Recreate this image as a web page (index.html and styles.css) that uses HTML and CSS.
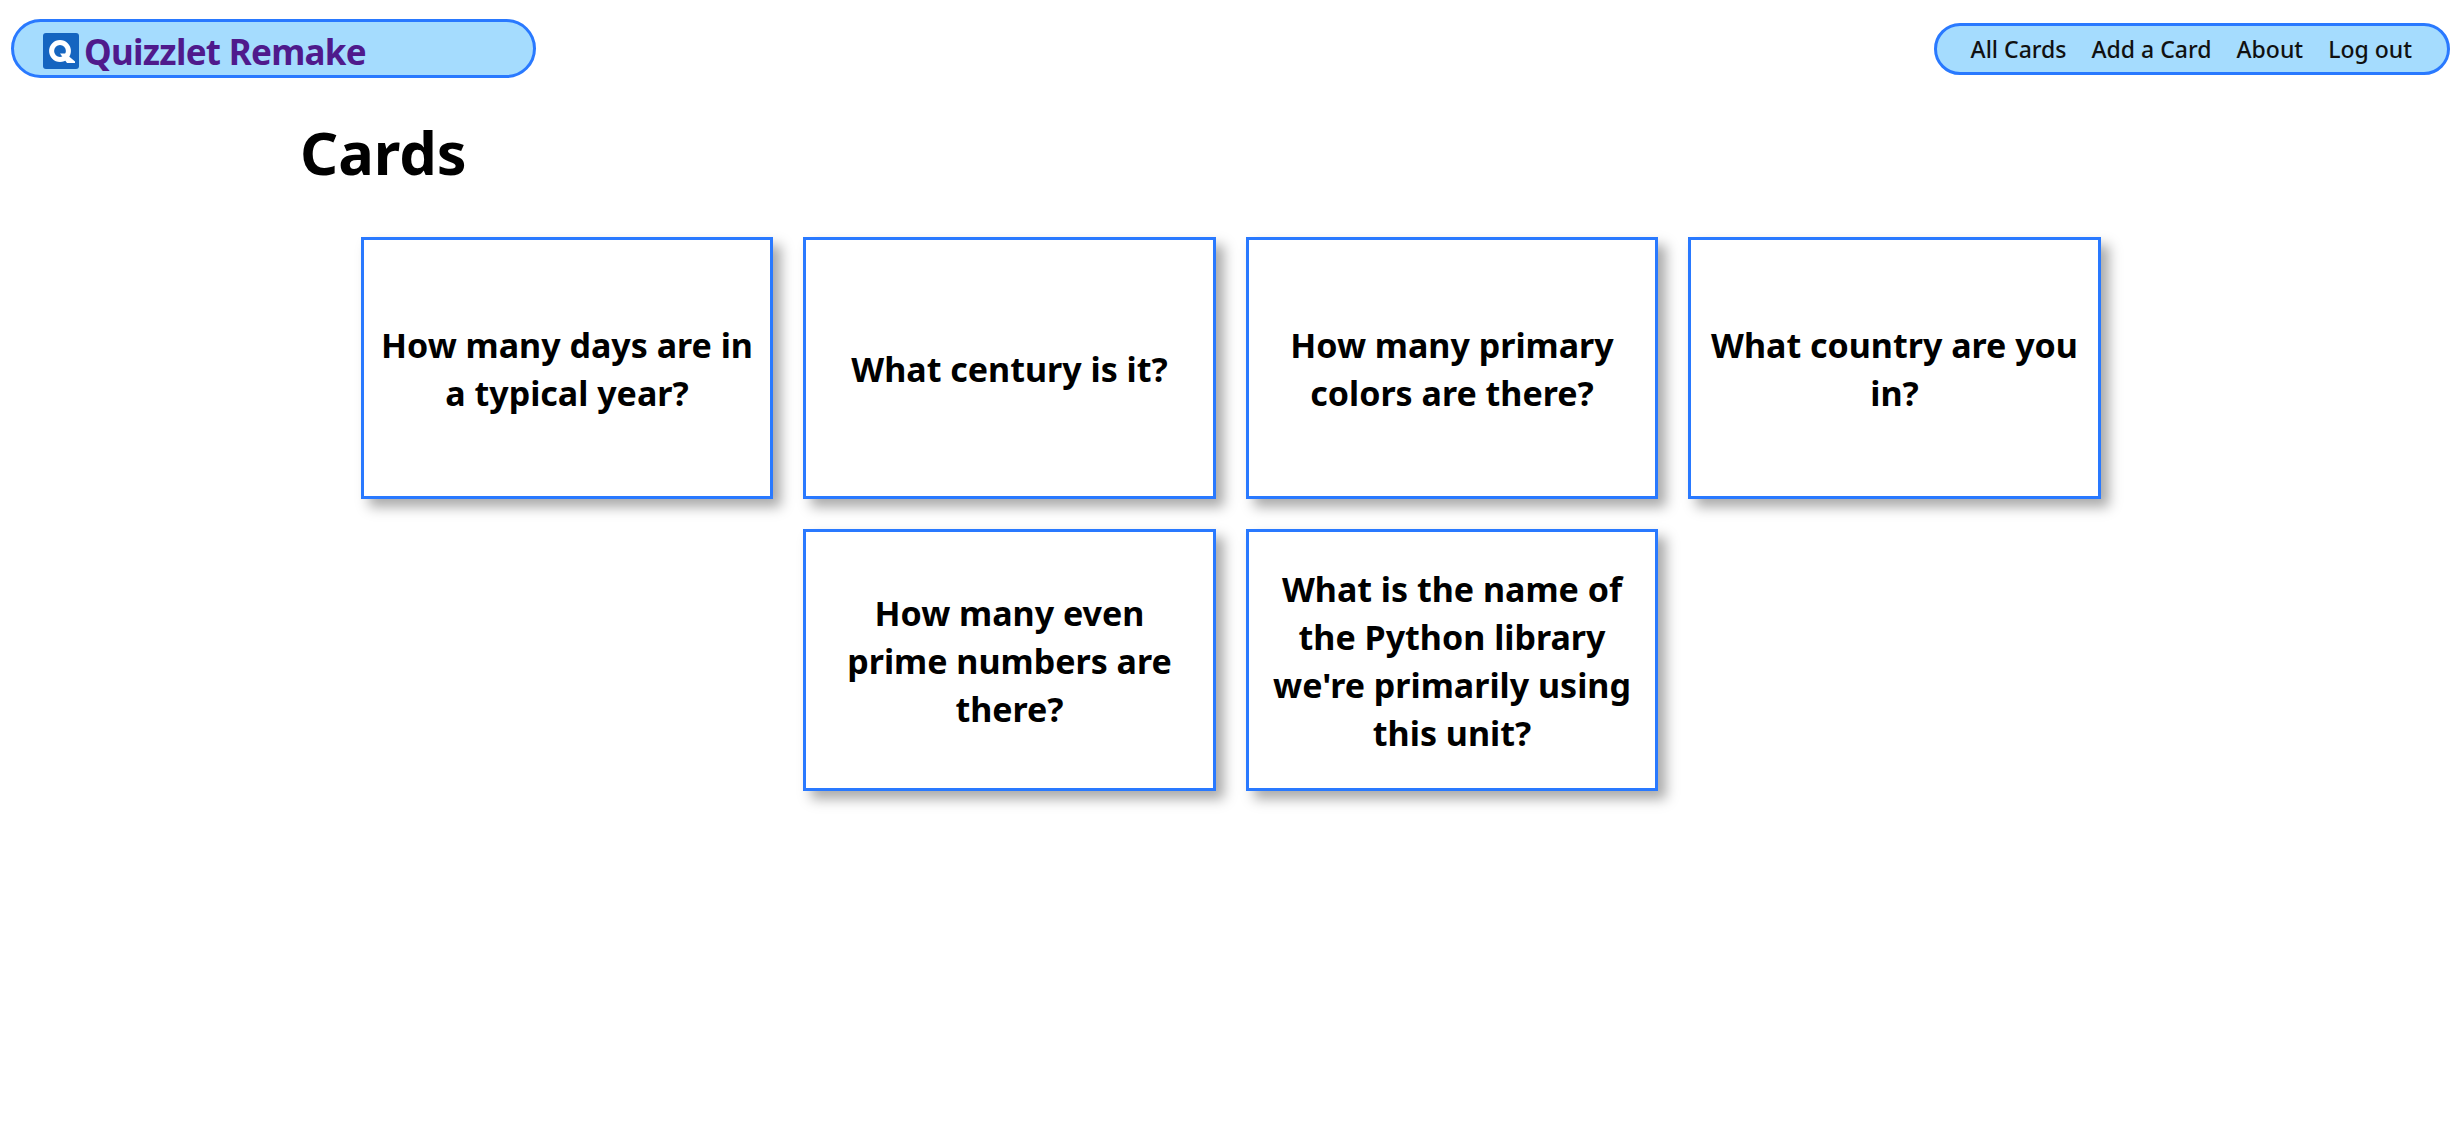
FILE: index.html
```html
<!DOCTYPE html>
<html lang="en">
<head>
<meta charset="utf-8">
<title>Quizzlet Remake</title>
<link rel="stylesheet" href="styles.css">
</head>
<body>
<header class="site-header">
  <a class="brand" href="#">
    <svg class="brand-icon" viewBox="0 0 36 36" aria-hidden="true">
      <rect width="36" height="36" rx="3" fill="#1565c0"/>
      <circle cx="17" cy="18" r="8.4" fill="none" stroke="#fff" stroke-width="5"/>
      <path d="M17 20.5h5.5l9.5 8v1.500h-8z" fill="#fff"/>
    </svg>
    <span>Quizzlet Remake</span>
  </a>
  <nav class="site-nav">
    <a href="#">All Cards</a>
    <a href="#">Add a Card</a>
    <a href="#">About</a>
    <a href="#">Log out</a>
  </nav>
</header>
<main class="content">
  <h1 class="page-title">Cards</h1>
  <section class="card-list">
    <article class="card">How many days are in a typical year?</article>
    <article class="card">What century is it?</article>
    <article class="card">How many primary colors are there?</article>
    <article class="card">What country are you in?</article>
    <article class="card">How many even prime numbers are there?</article>
    <article class="card">What is the name of the Python library we're primarily using this unit?</article>
  </section>
</main>
</body>
</html>
```
FILE: styles.css
```css
* { box-sizing: border-box; }
body {
  margin: 0;
  min-height: 100vh;
  background: #fff;
  color: #000;
  font-family: "Noto Sans", "Open Sans", sans-serif;
}
a { color: inherit; text-decoration: none; }
.site-header {
  display: flex;
  justify-content: space-between;
  align-items: center;
  padding: 19px 9px 0 11px;
}
.brand {
  display: flex;
  align-items: center;
  gap: 5px;
  width: 525px;
  height: 59px;
  padding: 5px 0 0 29px;
  background: #a5dcfe;
  border: 3px solid #2979ff;
  border-radius: 30px;
  color: #4f1a8c;
  font-size: 35px;
  font-weight: 700;
  letter-spacing: -0.7px;
}
.brand-icon { width: 36px; height: 36px; flex: none; }
.site-nav {
  display: flex;
  align-items: center;
  gap: 25px;
  height: 52px;
  padding: 0 35px 0 34px;
  background: #a5dcfe;
  border: 3px solid #2979ff;
  border-radius: 26px;
  color: #111;
  font-size: 23px;
  font-weight: 500;
}
.content { padding: 0 300px 40px; }
.page-title {
  margin: 34px 0 0;
  font-size: 59.5px;
  line-height: 80px;
  font-weight: 700;
}
.card-list {
  display: flex;
  flex-wrap: wrap;
  justify-content: center;
  gap: 30px;
  margin: 45px -10px 0 -7.5px;
}
.card {
  display: flex;
  align-items: center;
  justify-content: center;
  width: 412.5px;
  height: 262px;
  padding: 2px 15px 0;
  border: 3px solid #2979ff;
  box-shadow: 8px 8px 12px #aaa;
  text-align: center;
  font-size: 34px;
  line-height: 48px;
  font-weight: 700;
}
```
